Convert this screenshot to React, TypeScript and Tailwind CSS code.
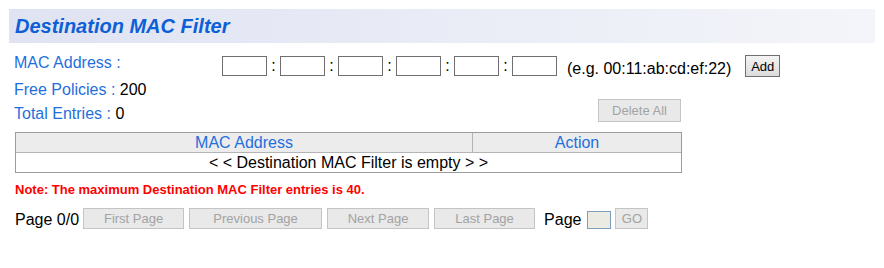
import React from 'react';

const MacBox: React.FC = () => (
  <input type="text" className="w-[45px] h-[20px] border border-[#6f6f6f] bg-white outline-none" />
);

const PagerButton: React.FC<{ label: string; width: string }> = ({ label, width }) => (
  <button
    disabled
    className={`${width} h-[21px] border border-[#c4c4c4] bg-[#e9e9e9] text-[13px] leading-none text-[#a3a3a3]`}
  >
    {label}
  </button>
);

const App: React.FC = () => {
  const boxes = [0, 1, 2, 3, 4, 5];

  return (
    <div className="w-[884px] h-[268px] bg-white pt-[9px] font-['Liberation_Sans',Arial,sans-serif] text-black">
      {/* Title bar */}
      <div className="mx-[9px] h-[34px] w-[866px] bg-gradient-to-r from-[#dfe3f2] to-[#f4f5fa] flex items-center pl-[6px]">
        <h1 className="text-[20px] font-bold italic text-[#0c5fd6] leading-none">Destination MAC Filter</h1>
      </div>

      <div className="pl-[14px]">
        {/* MAC input row */}
        <div className="mt-[11px] flex items-start h-[23px]">
          <span className="w-[208px] text-[16px] leading-[18px] text-[#1f6fdc]">MAC Address :</span>
          <div className="mt-[2px] flex items-center">
            {boxes.map((i) => (
              <React.Fragment key={i}>
                {i > 0 && <span className="w-[13px] text-center text-[16px] leading-[18px]">:</span>}
                <MacBox />
              </React.Fragment>
            ))}
          </div>
          <span className="ml-[10px] mt-[6px] text-[16px] leading-[18px]">(e.g. 00:11:ab:cd:ef:22)</span>
          <button className="ml-[14px] mt-[1px] h-[22px] w-[35px] border border-[#707070] bg-gradient-to-b from-[#f4f4f4] to-[#dcdcdc] text-[13px] leading-none">
            Add
          </button>
        </div>

        {/* Counters + Delete All */}
        <div className="mt-[4px] flex items-start">
          <div className="w-[584px] flex flex-col">
            <span className="text-[16px] leading-[18px] text-[#1f6fdc]">
              Free Policies : <span className="text-black">200</span>
            </span>
            <span className="mt-[6px] text-[16px] leading-[18px] text-[#1f6fdc]">
              Total Entries : <span className="text-black">0</span>
            </span>
          </div>
          <button
            disabled
            className="mt-[18px] w-[83px] h-[23px] border border-[#c4c4c4] bg-[#e9e9e9] text-[13px] leading-none text-[#a3a3a3]"
          >
            Delete All
          </button>
        </div>

        {/* Table */}
        <div className="mt-[9px] ml-[1px] w-[667px] border border-[#9c9c9c]">
          <div className="flex h-[20px] bg-[#ececec] border-b border-[#b4b4b4]">
            <div className="w-[457px] border-r border-[#b4b4b4] text-center text-[16px] leading-[19px] text-[#1f6fdc]">
              MAC Address
            </div>
            <div className="flex-1 text-center text-[16px] leading-[19px] text-[#1f6fdc]">Action</div>
          </div>
          <div className="h-[19px] text-center text-[16px] leading-[19px]">
            &lt; &lt; Destination MAC Filter is empty &gt; &gt;
          </div>
        </div>

        {/* Note */}
        <p className="mt-[9px] ml-[1px] text-[13px] leading-[15px] font-bold text-[#ff0000]">
          Note: The maximum Destination MAC Filter entries is 40.
        </p>

        {/* Pager */}
        <div className="mt-[11px] ml-[1px] flex items-center h-[21px]">
          <span className="text-[16px] leading-[18px] mt-[3px]">Page 0/0</span>
          <div className="ml-[4px] flex items-center gap-[5px]">
            <PagerButton label="First Page" width="w-[101px]" />
            <PagerButton label="Previous Page" width="w-[133px]" />
            <PagerButton label="Next Page" width="w-[102px]" />
            <PagerButton label="Last Page" width="w-[101px]" />
          </div>
          <span className="ml-[9px] text-[16px] leading-[18px] mt-[3px]">Page</span>
          <input
            type="text"
            disabled
            className="ml-[6px] mt-[3px] w-[24px] h-[18px] border border-[#7f9db9] bg-[#ebebe4]"
          />
          <button
            disabled
            className="ml-[4px] w-[33px] h-[21px] border border-[#c4c4c4] bg-[#e9e9e9] text-[13px] leading-none text-[#a3a3a3]"
          >
            GO
          </button>
        </div>
      </div>
    </div>
  );
};

export default App;
